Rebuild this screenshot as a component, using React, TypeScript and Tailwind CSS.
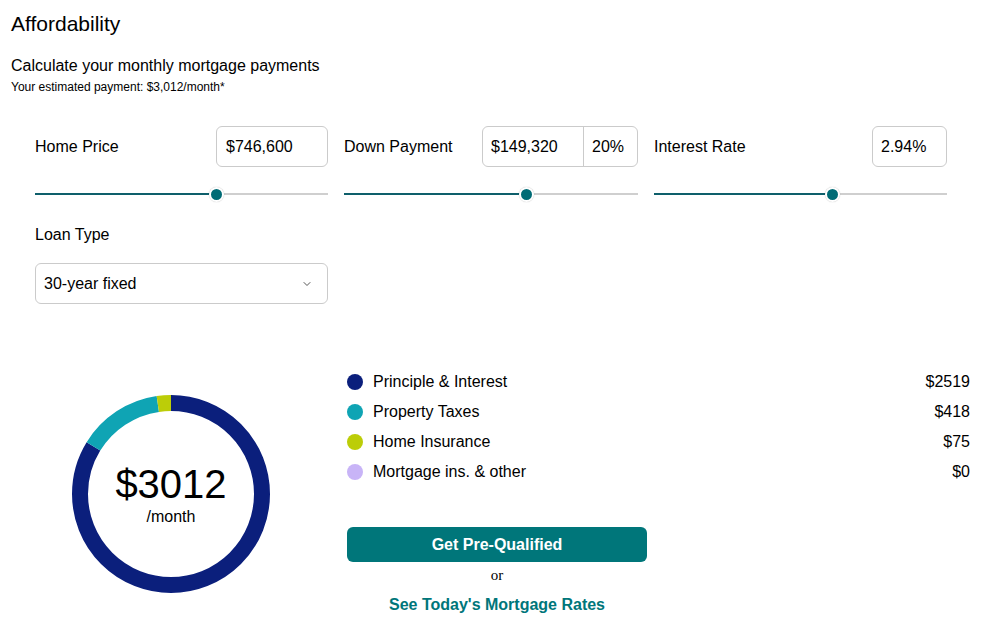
import { ChevronDown } from 'lucide-react'

interface SliderProps {
  value: number
}

function Slider({ value }: SliderProps) {
  return (
    <div className="relative h-[12px] mt-[21px] flex items-center">
      <div className="flex-1 flex h-[2px]">
        <div className="h-full bg-[#0e5f6b]" style={{ width: `${value}%` }} />
        <div className="h-full flex-1 bg-[#cfcfcf]" />
      </div>
      <div
        className="absolute top-1/2 w-[15px] h-[15px] -mt-[7.5px] -ml-[7.5px] rounded-full bg-[#006b75] border-2 border-white shadow-[0_0_1px_rgba(0,0,0,0.3)]"
        style={{ left: `${value}%` }}
      />
    </div>
  )
}

const legend = [
  { label: 'Principle & Interest', value: 2519, color: 'bg-[#0b1f7c]' },
  { label: 'Property Taxes', value: 418, color: 'bg-[#0fa4b4]' },
  { label: 'Home Insurance', value: 75, color: 'bg-[#bccd08]' },
  { label: 'Mortgage ins. & other', value: 0, color: 'bg-[#c8b4f7]' }
]

function Donut() {
  const total = 3012
  const r = 91
  const c = 2 * Math.PI * r
  const colors = ['#0b1f7c', '#0fa4b4', '#bccd08', '#c8b4f7']
  let offset = 0
  return (
    <div className="relative w-[198px] h-[198px]">
      <svg width="198" height="198" viewBox="0 0 198 198" className="-rotate-90">
        {legend.map((item, i) => {
          const len = (item.value / total) * c
          const el = (
            <circle
              key={item.label}
              cx="99"
              cy="99"
              r={r}
              fill="none"
              stroke={colors[i]}
              strokeWidth="16"
              strokeDasharray={`${len} ${c - len}`}
              strokeDashoffset={-offset}
            />
          )
          offset += len
          return el
        })}
      </svg>
      <div className="absolute inset-0 flex flex-col items-center justify-center">
        <div className="text-[40px] leading-[42px]">$3012</div>
        <div className="text-[16px] leading-[18px] mt-[3px]">/month</div>
      </div>
    </div>
  )
}

export default function App() {
  return (
    <div className="w-[983px] min-h-[617px] bg-white text-black font-['Liberation_Sans',Arial,sans-serif]">
      <div className="pl-[11px] pt-[11px]">
        <h1 className="text-[21px] leading-[25px]">Affordability</h1>
        <h2 className="text-[16px] leading-[20px] mt-[20px]">Calculate your monthly mortgage payments</h2>
        <p className="text-[12px] leading-[14px] mt-[4px]">Your estimated payment: $3,012/month*</p>
      </div>

      <div className="pl-[35px] mt-[32px] grid grid-cols-[293px_294px_293px] gap-x-[16px]">
        {/* Home price */}
        <div>
          <div className="flex items-center justify-between">
            <span className="text-[16px]">Home Price</span>
            <div className="w-[112px] h-[41px] border border-[#cbcbcb] rounded-[6px] flex items-center px-[9px] text-[16px]">
              $746,600
            </div>
          </div>
          <Slider value={62} />
        </div>

        {/* Down payment */}
        <div>
          <div className="flex items-center justify-between">
            <span className="text-[16px]">Down Payment</span>
            <div className="w-[156px] h-[41px] border border-[#cbcbcb] rounded-[6px] flex text-[16px]">
              <div className="w-[101px] flex items-center px-[8px] border-r border-[#cbcbcb]">$149,320</div>
              <div className="flex-1 flex items-center px-[8px]">20%</div>
            </div>
          </div>
          <Slider value={62} />
        </div>

        {/* Interest rate */}
        <div>
          <div className="flex items-center justify-between">
            <span className="text-[16px]">Interest Rate</span>
            <div className="w-[75px] h-[41px] border border-[#cbcbcb] rounded-[6px] flex items-center px-[8px] text-[16px]">
              2.94%
            </div>
          </div>
          <Slider value={61} />
        </div>

        {/* Loan type */}
        <div className="mt-[25px]">
          <div className="text-[16px] leading-[20px]">Loan Type</div>
          <div className="mt-[18px] h-[41px] border border-[#cbcbcb] rounded-[6px] flex items-center justify-between pl-[8px] pr-[14px] text-[16px]">
            <span>30-year fixed</span>
            <ChevronDown className="w-[12px] h-[12px] text-[#555]" strokeWidth={2} />
          </div>
        </div>
      </div>

      <div className="flex mt-[63px]">
        <div className="ml-[72px] mt-[28px]">
          <Donut />
        </div>
        <div className="ml-[77px] w-[623px]">
          {legend.map(item => (
            <div key={item.label} className="h-[30px] flex items-center text-[16px]">
              <span className={`w-[16px] h-[16px] rounded-full ${item.color}`} />
              <span className="ml-[10px] flex-1">{item.label}</span>
              <span>${item.value}</span>
            </div>
          ))}
          <div className="w-[300px] mt-[40px] text-center">
            <button className="w-full h-[35px] rounded-[6px] bg-[#00767a] text-white font-bold text-[16px]">
              Get Pre-Qualified
            </button>
            <div className="mt-[4px] text-[15px] leading-[18px] font-['Liberation_Serif',serif]">or</div>
            <div className="mt-[11px] text-[16px] leading-[20px] font-bold text-[#00767a]">See Today's Mortgage Rates</div>
          </div>
        </div>
      </div>
    </div>
  )
}
